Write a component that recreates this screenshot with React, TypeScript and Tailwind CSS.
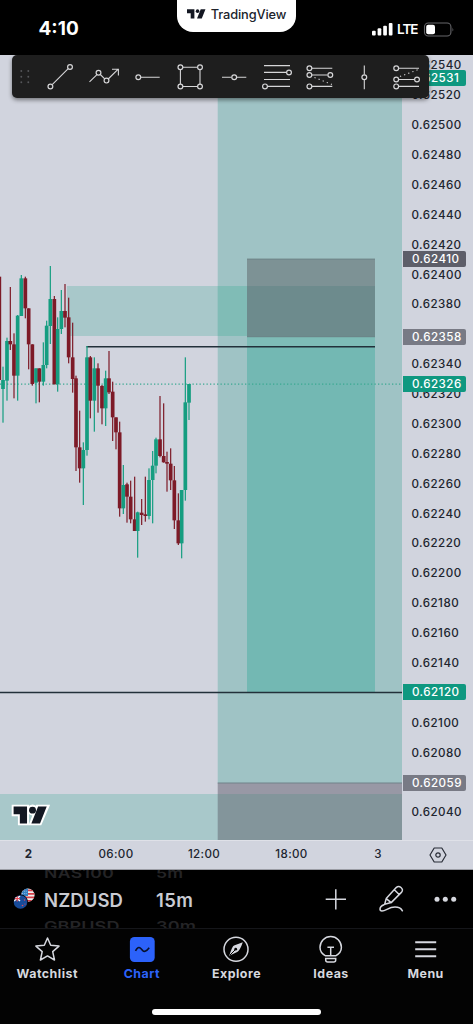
import React from "react";

const UP = "#159d80";
const DOWN = "#7d1a27";

// [x, high, low, body top, body bottom, rising] in thirds of a pixel from the segment origin
type Candle = [number, number, number, number, number, 0 | 1];

const morning: Candle[] = [
  [-2, 65, 400, 65, 375, 0], [9, 335, 503, 375, 402, 1], [21, 248, 437, 258, 377, 1], [31, 96, 285, 258, 268, 0],
  [42, 235, 430, 268, 362, 0], [53, 180, 437, 182, 362, 1], [64, 60, 183, 70, 183, 1], [76, 65, 190, 70, 160, 0],
  [86, 160, 343, 160, 268, 0], [97, 268, 392, 268, 387, 0], [108, 340, 445, 340, 383, 1], [118, 340, 442, 340, 380, 0],
  [130, 262, 392, 330, 380, 1], [140, 197, 340, 212, 330, 1], [151, 33, 267, 132, 213, 1], [163, 123, 388, 132, 388, 0],
  [173, 187, 410, 222, 388, 1], [184, 105, 237, 168, 222, 1], [195, 87, 217, 168, 188, 0], [206, 128, 325, 187, 307, 0],
  [218, 203, 413, 307, 372, 0], [228, 362, 648, 370, 577, 0], [239, 467, 683, 577, 640, 0], [250, 562, 750, 585, 640, 1],
  [261, 273, 602, 307, 585, 1], [271, 303, 490, 307, 437, 0], [283, 307, 530, 340, 437, 1], [294, 325, 473, 340, 392, 0],
];

const afternoon: Candle[] = [
  [96, 150, 268, 153, 220, 0], [107, 107, 273, 130, 220, 1], [117, 48, 177, 130, 172, 0], [128, 140, 318, 170, 247, 0],
  [138, 247, 343, 247, 292, 0], [149, 260, 545, 292, 520, 0], [160, 390, 537, 450, 520, 1], [171, 443, 563, 448, 485, 0],
  [182, 437, 565, 485, 553, 0], [194, 425, 588, 553, 588, 0], [203, 530, 668, 532, 588, 1], [215, 492, 570, 533, 540, 0],
  [226, 425, 560, 538, 543, 0], [237, 400, 553, 435, 543, 1], [248, 348, 565, 392, 435, 1], [258, 308, 415, 313, 392, 1],
  [270, 183, 367, 313, 363, 0], [281, 205, 383, 363, 382, 0], [291, 350, 470, 381, 386, 0], [302, 340, 465, 386, 436, 0],
  [313, 393, 582, 436, 556, 0], [325, 475, 630, 556, 625, 0], [335, 465, 670, 465, 625, 1], [346, 67, 497, 202, 465, 1],
  [357, 147, 255, 147, 203, 1],
];

function Candles({ data, ox, oy }: { data: Candle[]; ox: number; oy: number }) {
  return (
    <>
      {data.map(([x, hi, lo, top, bottom, up]) => {
        const cx = ox + x / 3;
        const color = up ? UP : DOWN;
        return (
          <g key={x} fill={color}>
            <rect x={cx - 0.6} y={oy + hi / 3} width={1.2} height={(lo - hi) / 3} />
            <rect x={cx - 1.85} y={oy + top / 3} width={3.7} height={(bottom - top) / 3} />
          </g>
        );
      })}
    </>
  );
}

function Chart() {
  return (
    <svg className="block h-[785px] w-[402px] shrink-0" viewBox="0 55 402 785">
      <rect x="67" y="286" width="151" height="50" fill="#a8c8ca" />
      <rect x="0" y="794" width="218" height="46" fill="#a8c8ca" />
      <rect x="217.7" y="55" width="184.3" height="728" fill="#9fc3c5" />
      <rect x="217.7" y="286" width="29.3" height="50" fill="#80bcb6" />
      <rect x="217.7" y="783" width="184.3" height="11" fill="#9898a5" />
      <rect x="217.7" y="794" width="184.3" height="46" fill="#83959b" />
      <rect x="217.7" y="782.5" width="184.3" height="1" fill="#71828a" />
      <rect x="247" y="258.7" width="128" height="27.3" fill="#7d9295" />
      <rect x="247" y="286" width="128" height="51" fill="#6d8b8d" />
      <rect x="247" y="337" width="128" height="10" fill="#7ebcb7" />
      <rect x="247" y="347" width="128" height="345" fill="#73b8b3" />
      <path d="M247 259.2H375M247 336.8H375" stroke="#6c8285" strokeWidth=".7" />
      <path d="M86.5 346.8H375" stroke="#22303a" strokeWidth="1.5" />
      <path d="M0 692.5H402" stroke="#22303a" strokeWidth="1.3" />
      <path d="M0 384.2H402" stroke="#3aa891" strokeWidth="1.2" strokeDasharray="1.3 2.2" />
      <Candles data={morning} ox={0} oy={255} />
      <Candles data={afternoon} ox={70} oy={335} />
      <g transform="translate(13.6 806.6) scale(.96)" fill="#131722">
        <path d="M0 0H14V17.5H6.5V8H0ZM25 0H35L27.5 17.5H18.5ZM16 3.5a3.7 3.7 0 1 0 7.4 0a3.7 3.7 0 1 0-7.4 0" stroke="#fff" strokeWidth="4" strokeLinejoin="miter" />
        <path d="M0 0H14V17.5H6.5V8H0ZM25.5 0H34.5L27.5 17.5H18.5Z" />
        <circle cx="19.7" cy="3.7" r="3.6" />
      </g>
    </svg>
  );
}

// Prices that a tag covers have no tick of their own
const covered = [62360, 62120, 62060];
const ticks = Array.from({ length: 26 }, (_, i) => 62540 - i * 20);

function Tag({ className, children }: { className: string; children: string }) {
  return (
    <div className={"absolute left-[1px] flex h-4 w-[63px] items-center rounded-r-[2px] pl-[9px] text-white " + className}>
      {children}
    </div>
  );
}

function PriceAxis() {
  return (
    <div className="relative h-[785px] w-[71px] overflow-hidden font-medium text-[11.6px] leading-4 tracking-[0.45px] text-[#20242e]">
      <div className="-mt-[4.5px] flex flex-col pl-[9.5px]">
        {ticks.map((t) => (
          <div key={t} className="flex h-[29.88px] shrink-0 items-center">{covered.includes(t) ? "" : "0." + t}</div>
        ))}
      </div>
      <Tag className="top-[15px] bg-[#0f9880]">0.62531</Tag>
      <Tag className="top-[196px] bg-[#5d5e69]">0.62410</Tag>
      <Tag className="top-[274px] bg-[#787a85]">0.62358</Tag>
      <Tag className="top-[321px] bg-[#0f9880]">0.62326</Tag>
      <Tag className="top-[629px] bg-[#0f9880]">0.62120</Tag>
      <Tag className="top-[720px] bg-[#787a85]">0.62059</Tag>
    </div>
  );
}

function Toolbar() {
  return (
    <div className="absolute left-3 top-0 h-[43px] w-[417px] rounded-[5px] bg-[#1e1e1e] shadow-[0_2px_4px_rgba(0,0,0,0.45)]">
      <svg className="block h-[43px] w-[417px]" viewBox="12 55 417 43" fill="none" stroke="#d6d6d8" strokeWidth="1.1">
        <g fill="#55565a" stroke="none">
          {[71, 76.7, 82.3].map((y) => (
            <React.Fragment key={y}>
              <circle cx="21.3" cy={y} r=".95" />
              <circle cx="28.3" cy={y} r=".95" />
            </React.Fragment>
          ))}
        </g>
        <path d="M52.2 84.7L68.2 68.7M89.5 81.8L96.7 74.8M100.3 74.5L104.7 78.8M108.2 79L118.2 69.2M112 69.2H118.4V75.6M141 77.3H159.7" />
        <path d="M183 67.2H197.5M183 86.5H197.5M180.4 69.7V84M200 69.7V84M222 77.3H231.5M237 77.3H246.3" />
        <path d="M264 65.6H290M264 72.4H286.4M264 79.5H290M267.5 86.4H290" />
        <path d="M312 68.2H332.3M312 75H327.5M312 86.4H332.3M364.3 65.5V74.5M364.3 80V89.3M398.8 68.2H419M398.8 79.5H414.5M398.8 86.4H419" />
        <path d="M314.5 77.5L332 84.5M400 76.5L418.5 69.5" strokeDasharray="1.2 3.2" />
        {[
          [50.4, 86.5], [70, 67], [98.5, 72.7], [106.5, 80.6], [138.3, 77.3], [180.4, 67.2], [200, 67.2],
          [180.4, 86.5], [200, 86.5], [234.2, 77.3], [289, 72.5], [265, 86.4], [309.4, 68.2], [309.4, 75],
          [330.3, 75], [309.4, 86.4], [364.3, 77.3], [396.2, 68.2], [396.2, 79.5], [417, 79.5], [396.2, 86.4],
        ].map(([x, y]) => (
          <circle key={x + "-" + y} cx={x} cy={y} r="2.4" fill="#1e1e1e" strokeWidth="1.2" />
        ))}
      </svg>
    </div>
  );
}

function StatusBar() {
  return (
    <header className="flex h-[55px] items-start justify-between bg-black text-white">
      <div className="w-[177px] pl-[38.5px] pt-[17px] text-[19px] font-bold leading-6">4:10</div>
      <div className="flex h-8 w-[119px] items-start justify-center gap-[5px] rounded-b-[16px] bg-white pt-[7px] text-[#20232b]">
        <svg className="mt-[2px] h-[10px] w-[19px]" viewBox="0 0 36 18" fill="#131722">
          <path d="M0 0H14V17.5H7V7.5H0ZM26 0H35L28 17.5H19Z" />
          <circle cx="20" cy="3.6" r="3.4" />
        </svg>
        <span className="text-[12.8px] font-medium leading-[15px] tracking-[-0.1px]">TradingView</span>
      </div>
      <div className="flex w-[177px] items-center justify-end gap-[4px] pr-[19px] pt-[19px]">
        <svg className="h-[14px] w-[21px] shrink-0" viewBox="0 0 21 14" fill="white">
          <rect x="0" y="8.7" width="3.7" height="4.8" rx="1" />
          <rect x="5.6" y="6.3" width="3.7" height="7.2" rx="1" />
          <rect x="11.2" y="3.7" width="3.7" height="9.8" rx="1" />
          <rect x="16.8" y="1" width="3.7" height="12.5" rx="1" />
        </svg>
        <span className="w-[22px] text-[13.5px] font-semibold leading-5 tracking-[-1px]">LTE</span>
        <svg className="h-[15px] w-[31px] shrink-0" viewBox="0 0 31 15" fill="none">
          <rect x="1.5" y="1" width="26.4" height="13" rx="3.8" stroke="#66666a" strokeWidth="1.1" />
          <rect x="3.2" y="2.8" width="8.8" height="9.5" rx="2" fill="white" />
          <path d="M29.5 5.5Q31 7.5 29.5 9.5Z" fill="#66666a" />
        </svg>
      </div>
    </header>
  );
}

function TimeAxis() {
  return (
    <div className="flex h-[30px] items-center border-b border-[#9b9da5] border-t border-t-[#dfe1e8] bg-[#d1d4de] text-[11.6px] font-medium tracking-[0.35px] text-[#20242e]">
      <span className="w-[57px] text-center font-bold">2</span>
      <span className="w-[118px] text-center">06:00</span>
      <span className="w-[58px] text-center">12:00</span>
      <span className="w-[117px] text-center">18:00</span>
      <span className="w-[56px] text-center">3</span>
      <svg className="ml-[23px] h-[18px] w-[18px]" viewBox="0 0 18 18" fill="none" stroke="#292d37" strokeWidth="1.2">
        <path d="M5.2 2H12.8L17 9L12.8 16H5.2L1 9Z" strokeLinejoin="round" />
        <circle cx="9" cy="9" r="2.2" />
      </svg>
    </div>
  );
}

function Flags() {
  return (
    <svg className="h-[22px] w-[22px] shrink-0" viewBox="0 0 22 22">
      <defs>
        <clipPath id="us"><circle cx="14.9" cy="7.2" r="6.6" /></clipPath>
        <clipPath id="nz"><circle cx="7.5" cy="14" r="6.8" /></clipPath>
      </defs>
      <g clipPath="url(#us)">
        <rect width="22" height="22" fill="#eee" />
        <path d="M8 2.3H22M8 5.8H22M8 9.3H22M8 12.8H22" stroke="#d64049" strokeWidth="1.7" />
        <rect x="7" width="8" height="8" fill="#327fc2" />
        <path d="M9 3.2H14M9 5.6H14" stroke="#b9d7ee" strokeWidth=".8" strokeDasharray="1 1.2" />
      </g>
      <circle cx="7.5" cy="14" r="7.5" fill="#000" />
      <g clipPath="url(#nz)">
        <rect width="22" height="22" fill="#174b99" />
        <path d="M1 7.5L7 13M1 13L7 8" stroke="#fff" strokeWidth="1.5" />
        <path d="M0 10.6H7M4.2 6V13.5" stroke="#e44b55" strokeWidth="1.2" />
        <circle cx="11.5" cy="12" r=".7" fill="#e44b55" />
        <circle cx="9.5" cy="17.5" r=".8" fill="#e44b55" />
        <circle cx="12" cy="16" r=".6" fill="#e44b55" />
      </g>
    </svg>
  );
}

function SymbolBar() {
  return (
    <div className="flex h-[59px] items-center overflow-hidden border-b border-[#15161a] bg-black text-[#c9cbd2]">
      <div className="flex w-[44px] pl-[13px]"><Flags /></div>
      <div className="flex w-[112px] flex-col font-semibold">
        <span className="h-[25px] origin-top scale-y-75 pt-[6px] text-[17.5px] leading-5 tracking-[0.4px] text-[#242426]">NAS100</span>
        <span className="h-[26px] text-[18.5px] leading-[28px] tracking-[0.1px]">NZDUSD</span>
        <span className="h-[25px] origin-bottom scale-y-75 pt-[1px] text-[18px] leading-5 tracking-[0.1px] text-[#242426]">GBPUSD</span>
      </div>
      <div className="flex w-[165px] flex-col font-semibold">
        <span className="h-[25px] origin-top scale-y-75 pt-[6px] text-[17.5px] leading-5 tracking-[0.2px] text-[#242426]">5m</span>
        <span className="h-[26px] text-[18.5px] leading-[28px] tracking-[0.4px]">15m</span>
        <span className="h-[25px] origin-bottom scale-y-75 pt-[1px] text-[18px] leading-5 tracking-[0.2px] text-[#242426]">30m</span>
      </div>
      <svg className="h-[32px] w-[152px]" viewBox="321 883 152 32" fill="none" stroke="#d6d8df" strokeWidth="1.5" strokeLinecap="round" strokeLinejoin="round">
        <path d="M325.7 899.3H346M335.8 889.2V909.5" strokeLinecap="butt" />
        <path d="M384.7 904.2L386.2 898.6L396.2 887.6Q398.5 885.3 401 887.5Q403.7 889.8 401.4 892.4L391.2 902.6L384.7 904.2M386.2 898.6L391.2 902.6M394.3 889.8L399.2 894.5M384 904.7Q380.2 906 380 909Q380 911 382 911C386 911 388.6 907 395 907Q400.5 907 402.4 910.8" />
        <g fill="#d6d8df" stroke="none">
          <circle cx="437" cy="899.3" r="2.5" />
          <circle cx="445.3" cy="899.3" r="2.5" />
          <circle cx="453.7" cy="899.3" r="2.5" />
        </g>
      </svg>
    </div>
  );
}

function Tab({ label, active, children }: { label: string; active?: boolean; children: React.ReactNode }) {
  return (
    <div className={"flex flex-1 flex-col items-center pt-[6px] " + (active ? "text-[#2c62fa]" : "text-[#d6d8df]")}>
      <svg className="h-[28px] w-[28px]" viewBox="0 0 28 28" fill="none" stroke="currentColor" strokeWidth="1.5">
        {children}
      </svg>
      <span className="mt-[3px] text-[12.4px] font-bold leading-4 tracking-[0.5px]">{label}</span>
    </div>
  );
}

function TabBar() {
  return (
    <nav className="flex h-[71px] bg-[#030303]">
      <Tab label="Watchlist">
        <path d="M14.5 3L17.7 10.3L26 11.1L19.7 16.6L21.5 25L14.5 20.9L7.4 25L9.2 16.6L2.9 11.1L11.3 10.3Z" strokeLinejoin="round" />
      </Tab>
      <Tab label="Chart" active>
        <rect x="1.9" y="2" width="24.8" height="25" rx="4.5" fill="currentColor" stroke="none" />
        <path d="M7.5 15.8Q10 10.7 12.8 13.5L14.8 15.6Q17.2 18 21.2 12.8" stroke="#07102b" strokeWidth="1.6" />
      </Tab>
      <Tab label="Explore">
        <circle cx="14" cy="14.2" r="12" />
        <path d="M20.8 7.2Q18.2 15 15.2 17L7.2 20.8Q10.3 11 12 10.5Z" fill="currentColor" stroke="none" />
        <path d="M8 20L13 15" stroke="#030303" strokeWidth="1" />
        <circle cx="13.7" cy="14.2" r="1.4" fill="#030303" stroke="none" />
      </Tab>
      <Tab label="Ideas">
        <path d="M8.5 20.8C5 19 3 16.2 3 12.3A10.7 10.7 0 0 1 24.4 12.3C24.4 16.2 22.2 19 18.7 20.8ZM13.7 20.5V12.3M10.4 12.3H17" />
        <path d="M8.7 23.4H18.7V24.9Q18.7 26.9 16.7 26.9H10.7Q8.7 26.9 8.7 24.9Z" />
      </Tab>
      <Tab label="Menu">
        <path d="M3.2 7.3H24.2M3.2 14.3H24.2M3.2 21.3H24.2" strokeWidth="1.9" />
      </Tab>
    </nav>
  );
}

export default function App() {
  return (
    <div className="flex h-[1024px] w-[473px] flex-col overflow-hidden bg-[#030303] font-['Inter',sans-serif]">
      <StatusBar />
      <main className="relative flex h-[785px] bg-[#d1d4de]">
        <Chart />
        <PriceAxis />
        <Toolbar />
      </main>
      <TimeAxis />
      <SymbolBar />
      <TabBar />
      <div className="mt-[9px] ml-[152px] h-[6px] w-[169px] shrink-0 rounded-full bg-white" />
    </div>
  );
}
